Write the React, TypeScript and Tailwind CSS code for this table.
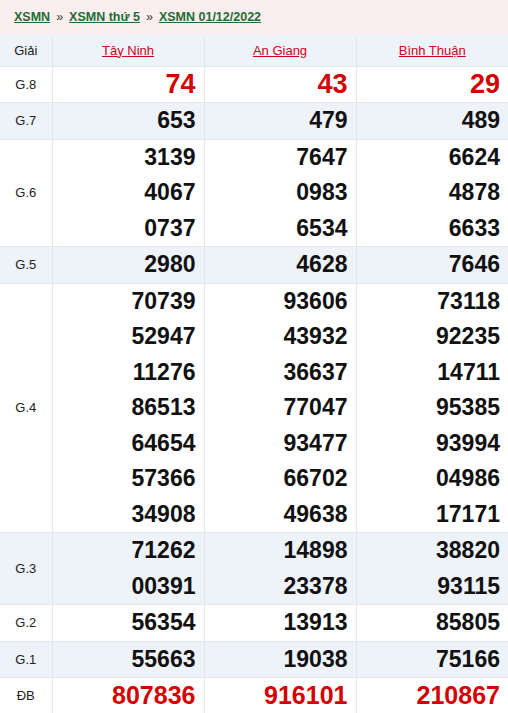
import React from 'react';

type Row = { label: string; values: string[][]; kind?: 'g8' | 'db' };

const provinces = ['Tây Ninh', 'An Giang', 'Bình Thuận'];

const rows: Row[] = [
  { label: 'G.8', kind: 'g8', values: [['74'], ['43'], ['29']] },
  { label: 'G.7', values: [['653'], ['479'], ['489']] },
  { label: 'G.6', values: [['3139', '4067', '0737'], ['7647', '0983', '6534'], ['6624', '4878', '6633']] },
  { label: 'G.5', values: [['2980'], ['4628'], ['7646']] },
  {
    label: 'G.4',
    values: [
      ['70739', '52947', '11276', '86513', '64654', '57366', '34908'],
      ['93606', '43932', '36637', '77047', '93477', '66702', '49638'],
      ['73118', '92235', '14711', '95385', '93994', '04986', '17171'],
    ],
  },
  { label: 'G.3', values: [['71262', '00391'], ['14898', '23378'], ['38820', '93115']] },
  { label: 'G.2', values: [['56354'], ['13913'], ['85805']] },
  { label: 'G.1', values: [['55663'], ['19038'], ['75166']] },
  { label: 'ĐB', kind: 'db', values: [['807836'], ['916101'], ['210867']] },
];

export default function App() {
  return (
    <div className="w-[508px] bg-white font-['Liberation_Sans',Arial,sans-serif]">
      <div className="h-[35px] bg-[#fbeeee] flex items-center px-[14px] text-[12.5px] font-bold text-[#236b35]">
        <a className="underline">XSMN</a>
        <span className="mx-[6px] text-[#333] font-normal">»</span>
        <a className="underline">XSMN thứ 5</a>
        <span className="mx-[6px] text-[#333] font-normal">»</span>
        <a className="underline">XSMN 01/12/2022</a>
      </div>
      <table className="w-full border-collapse table-fixed">
        <colgroup>
          <col className="w-[52px]" />
          <col />
          <col />
          <col />
        </colgroup>
        <thead>
          <tr className="bg-[#eef2f9] h-[31px]">
            <th className="border border-[#e4e7ec] border-t-0 border-l-0 font-normal text-[13px] text-[#222]">Giải</th>
            {provinces.map((p) => (
              <th key={p} className="border border-[#e4e7ec] border-t-0 font-normal text-[13px] text-[#d0021b] underline last:border-r-0">
                {p}
              </th>
            ))}
          </tr>
        </thead>
        <tbody>
          {rows.map((r, i) => (
            <tr key={r.label} className={i % 2 === 1 ? 'bg-[#eef2f9]' : 'bg-white'}>
              <td className="border border-[#e4e7ec] border-l-0 text-center text-[13px] text-[#222]">
                {r.label}
              </td>
              {r.values.map((col, j) => (
                <td key={j} className="border border-[#e4e7ec] text-right pr-[8px] align-middle last:border-r-0">
                  {col.map((v) => (
                    <div
                      key={v}
                      className={
                        r.kind === 'g8'
                          ? 'h-[35.5px] leading-[35.5px] text-[27px] font-bold text-[#d50000]'
                          : r.kind === 'db'
                          ? 'h-[35.5px] leading-[35.5px] text-[25px] font-bold text-[#d50000]'
                          : 'h-[35.5px] leading-[35.5px] text-[23px] font-bold text-[#111]'
                      }
                    >
                      {v}
                    </div>
                  ))}
                </td>
              ))}
            </tr>
          ))}
        </tbody>
      </table>
    </div>
  );
}
